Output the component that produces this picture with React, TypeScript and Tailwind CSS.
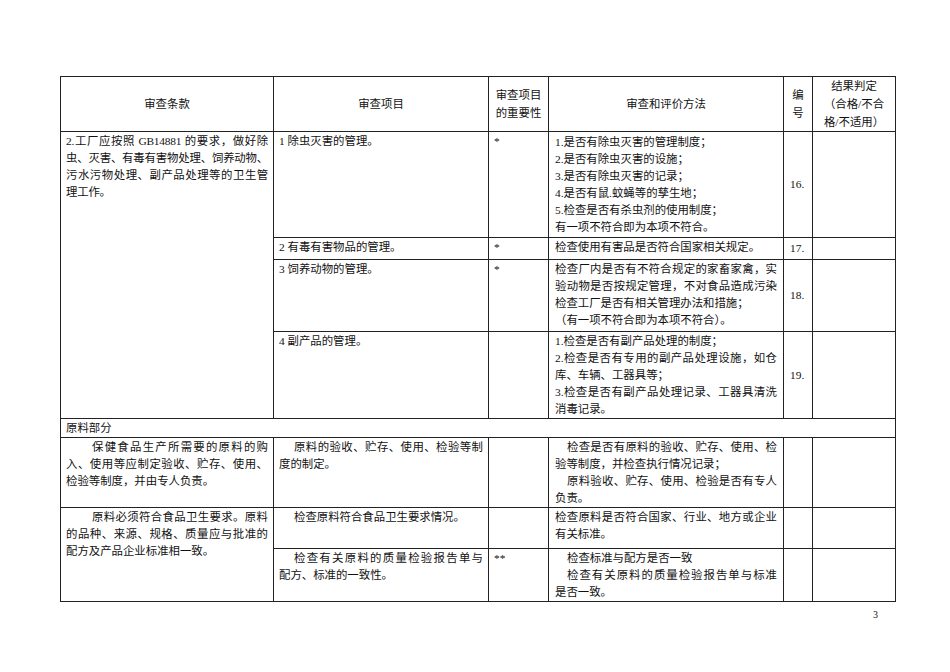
import clsx from "clsx";

type Line = { t: string; full?: boolean; indent?: string };

const FULL = "text-justify [text-align-last:justify]";

function Lines({ lines }: { lines: Line[] }) {
	return (
		<>
			{lines.map((l, i) => (
				<div key={i} className={clsx("whitespace-nowrap", l.full && FULL, l.indent)}>
					{l.t}
				</div>
			))}
		</>
	);
}

const td = "border border-[#222] align-top px-[5px] pt-[1px]";
const tdMethod = "border border-[#222] align-top px-[6px] pt-[1px]";
const tdNum = "border border-[#222] align-middle px-[6px]";
const th = "border border-[#222] align-middle text-center font-normal px-[4px]";

export default function App() {
	return (
		<div className="min-h-screen w-[950px] bg-white text-[#111] text-[11.4px] leading-[17px] [font-family:'Liberation_Serif','Noto_Sans_CJK_SC',serif]">
			<div className="pl-[60px] pt-[76px]">
				<table className="table-fixed border-collapse w-[835px]">
					<colgroup>
						<col className="w-[213px]" />
						<col className="w-[215px]" />
						<col className="w-[60px]" />
						<col className="w-[235px]" />
						<col className="w-[29px]" />
						<col className="w-[83px]" />
					</colgroup>
					<thead>
						<tr className="h-[54px]">
							<th className={th}>审查条款</th>
							<th className={th}>审查项目</th>
							<th className={clsx(th, "leading-[18px]")}>
								审查项目
								<br />
								的重要性
							</th>
							<th className={th}>审查和评价方法</th>
							<th className={clsx(th, "px-0 leading-[18px]")}>
								编
								<br />
								号
							</th>
							<th className={clsx(th, "leading-[18px]")}>
								结果判定
								<br />
								（合格/不合
								<br />
								格/不适用）
							</th>
						</tr>
					</thead>
					<tbody>
						<tr className="h-[106px]">
							<td rowSpan={4} className={clsx(td, "px-[3px] tracking-[-0.2px]")}>
								<Lines
									lines={[
										{ t: "2.工厂应按照 GB14881 的要求，做好除", full: true },
										{ t: "虫、灭害、有毒有害物处理、饲养动物、", full: true },
										{ t: "污水污物处理、副产品处理等的卫生管", full: true },
										{ t: "理工作。" },
									]}
								/>
							</td>
							<td className={td}>1 除虫灭害的管理。</td>
							<td className={td}>*</td>
							<td className={clsx(tdMethod, "pt-[2px]")}>
								<Lines
									lines={[
										{ t: "1.是否有除虫灭害的管理制度；" },
										{ t: "2.是否有除虫灭害的设施；" },
										{ t: "3.是否有除虫灭害的记录；" },
										{ t: "4.是否有鼠.蚊蝇等的孳生地；" },
										{ t: "5.检查是否有杀虫剂的使用制度；" },
										{ t: "有一项不符合即为本项不符合。" },
									]}
								/>
							</td>
							<td className={tdNum}>16.</td>
							<td className={td}></td>
						</tr>
						<tr className="h-[22px]">
							<td className={td}>2 有毒有害物品的管理。</td>
							<td className={td}>*</td>
							<td className={tdMethod}>检查使用有害品是否符合国家相关规定。</td>
							<td className={tdNum}>17.</td>
							<td className={td}></td>
						</tr>
						<tr className="h-[72px]">
							<td className={td}>3 饲养动物的管理。</td>
							<td className={td}>*</td>
							<td className={tdMethod}>
								<Lines
									lines={[
										{ t: "检查厂内是否有不符合规定的家畜家禽，实", full: true },
										{ t: "验动物是否按规定管理，不对食品造成污染", full: true },
										{ t: "检查工厂是否有相关管理办法和措施；" },
										{ t: "（有一项不符合即为本项不符合）。" },
									]}
								/>
							</td>
							<td className={tdNum}>18.</td>
							<td className={td}></td>
						</tr>
						<tr className="h-[86px]">
							<td className={td}>4 副产品的管理。</td>
							<td className={td}></td>
							<td className={clsx(tdMethod, "pt-0")}>
								<Lines
									lines={[
										{ t: "1.检查是否有副产品处理的制度；" },
										{ t: "2.检查是否有专用的副产品处理设施，如仓", full: true },
										{ t: "库、车辆、工器具等；" },
										{ t: "3.检查是否有副产品处理记录、工器具清洗", full: true },
										{ t: "消毒记录。" },
									]}
								/>
							</td>
							<td className={tdNum}>19.</td>
							<td className={td}></td>
						</tr>
						<tr className="h-[19px]">
							<td colSpan={6} className={clsx(td, "px-[3px] pt-0")}>
								原料部分
							</td>
						</tr>
						<tr className="h-[70px]">
							<td className={clsx(td, "px-[3px]")}>
								<Lines
									lines={[
										{ t: "保健食品生产所需要的原料的购", full: true, indent: "pl-[26px]" },
										{ t: "入、使用等应制定验收、贮存、使用、", full: true },
										{ t: "检验等制度，并由专人负责。" },
									]}
								/>
							</td>
							<td className={td}>
								<Lines
									lines={[
										{ t: "原料的验收、贮存、使用、检验等制", full: true, indent: "pl-[15px]" },
										{ t: "度的制定。" },
									]}
								/>
							</td>
							<td className={td}></td>
							<td className={tdMethod}>
								<Lines
									lines={[
										{ t: "检查是否有原料的验收、贮存、使用、检", full: true, indent: "pl-[12px]" },
										{ t: "验等制度，并检查执行情况记录；" },
										{ t: "原料验收、贮存、使用、检验是否有专人", full: true, indent: "pl-[12px]" },
										{ t: "负责。" },
									]}
								/>
							</td>
							<td className={tdNum}></td>
							<td className={td}></td>
						</tr>
						<tr className="h-[41px]">
							<td rowSpan={2} className={clsx(td, "px-[3px]")}>
								<Lines
									lines={[
										{ t: "原料必须符合食品卫生要求。原料", full: true, indent: "pl-[26px]" },
										{ t: "的品种、来源、规格、质量应与批准的", full: true },
										{ t: "配方及产品企业标准相一致。" },
									]}
								/>
							</td>
							<td className={td}>
								<Lines lines={[{ t: "检查原料符合食品卫生要求情况。", indent: "pl-[15px]" }]} />
							</td>
							<td className={td}></td>
							<td className={tdMethod}>
								<Lines
									lines={[
										{ t: "检查原料是否符合国家、行业、地方或企业", full: true },
										{ t: "有关标准。" },
									]}
								/>
							</td>
							<td className={tdNum}></td>
							<td className={td}></td>
						</tr>
						<tr className="h-[53px]">
							<td className={td}>
								<Lines
									lines={[
										{ t: "检查有关原料的质量检验报告单与", full: true, indent: "pl-[15px]" },
										{ t: "配方、标准的一致性。" },
									]}
								/>
							</td>
							<td className={td}>**</td>
							<td className={tdMethod}>
								<Lines
									lines={[
										{ t: "检查标准与配方是否一致", indent: "pl-[12px]" },
										{ t: "检查有关原料的质量检验报告单与标准", full: true, indent: "pl-[12px]" },
										{ t: "是否一致。" },
									]}
								/>
							</td>
							<td className={tdNum}></td>
							<td className={td}></td>
						</tr>
					</tbody>
				</table>
				<div className="w-[835px] pr-[17px] pt-[7px] text-right text-[10px] leading-[12px]">3</div>
			</div>
		</div>
	);
}
